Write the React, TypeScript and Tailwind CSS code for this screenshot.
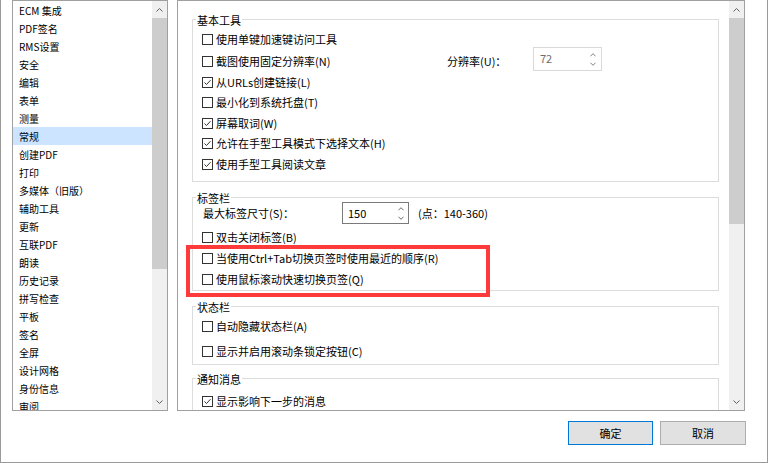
import React from "react";

const items = [
  "ECM 集成",
  "PDF签名",
  "RMS设置",
  "安全",
  "编辑",
  "表单",
  "测量",
  "常规",
  "创建PDF",
  "打印",
  "多媒体（旧版）",
  "辅助工具",
  "更新",
  "互联PDF",
  "朗读",
  "历史记录",
  "拼写检查",
  "平板",
  "签名",
  "全屏",
  "设计网格",
  "身份信息",
  "审阅",
];

function Chevron({ up, color = "#606060", w = 7 }: { up?: boolean; color?: string; w?: number }) {
  return (
    <svg width={w} height="4" viewBox="0 0 7 4" className="block">
      <path
        d={up ? "M0.5 3.5 L3.5 0.5 L6.5 3.5" : "M0.5 0.5 L3.5 3.5 L6.5 0.5"}
        stroke={color}
        strokeWidth="1"
        fill="none"
      />
    </svg>
  );
}

function Check({ checked }: { checked?: boolean }) {
  return (
    <svg width="11" height="11" viewBox="0 0 11 11" className="block shrink-0">
      <rect x="0.5" y="0.5" width="10" height="10" fill="white" stroke="#333333" />
      {checked && <path d="M2.5 5.5 L4.5 7.5 L8.5 3.2" stroke="#333333" strokeWidth="1" fill="none" />}
    </svg>
  );
}

function CheckRow({ label, checked, h }: { label: string; checked?: boolean; h: string }) {
  return (
    <div className={`flex items-center gap-[3px] pl-[9px] ${h}`}>
      <Check checked={checked} />
      <span className="leading-none">{label}</span>
    </div>
  );
}

function Group({ label, className, children }: { label: string; className: string; children: React.ReactNode }) {
  return (
    <div className={`ml-[14px] mr-[10px] border border-[#dcdcdc] ${className}`}>
      <div className="-mt-[5px] ml-[3px] h-[10px] w-fit bg-white px-[1px] leading-[10px]">{label}</div>
      {children}
    </div>
  );
}

function ScrollBar({ thumb }: { thumb: string }) {
  return (
    <div className="flex w-[15px] shrink-0 flex-col bg-[#f0f0f0]">
      <div className="flex h-[17px] items-center justify-center">
        <Chevron up />
      </div>
      <div className={`bg-[#cdcdcd] ${thumb}`} />
      <div className="flex-1" />
      <div className="flex h-[17px] items-center justify-center">
        <Chevron />
      </div>
    </div>
  );
}

export default function App() {
  return (
    <div className="relative flex h-[463px] w-[768px] flex-col overflow-hidden border-b border-l border-r border-[#9a9a9a] bg-white font-['Noto_Sans_CJK_SC',sans-serif] text-[11px] text-black">
      <div className="flex h-[411px] gap-[9px] pl-[11px]">
        {/* left list */}
        <div className="flex h-[411px] w-[156px] border border-[#a0a0a0]">
          <div className="flex-1 overflow-hidden text-[10px]">
            {items.map((it) => (
              <div
                key={it}
                className={`flex h-[18px] items-center pl-[6px] ${it === "常规" ? "bg-[#cce4ff]" : ""}`}
              >
                {it}
              </div>
            ))}
          </div>
          <ScrollBar thumb="h-[251px]" />
        </div>

        {/* right panel */}
        <div className="flex h-[411px] w-[568px] border border-[#a0a0a0]">
          <div className="flex-1 overflow-hidden">
            <Group label="基本工具" className="mt-[18px] pb-[6.5px]">
              <div className="mt-[4px]" />
              <CheckRow label="使用单键加速键访问工具" h="h-[21px]" />
              <div className="flex h-[22px] items-center">
                <div className="flex w-[254px] items-center gap-[3px] pl-[9px]">
                  <Check />
                  <span className="leading-none">截图使用固定分辨率(N)</span>
                </div>
                <div className="w-[86px] leading-none">分辨率(U)：</div>
                <div className="mb-[4px] flex h-[24px] w-[69px] items-stretch border border-[#d9d9d9] bg-white">
                  <div className="flex-1 pl-[6px] pt-[3px] leading-[14px] text-[#6d6d6d]">72</div>
                  <div className="flex w-[17px] flex-col items-center justify-center gap-[5px]">
                    <Chevron up color="#6d6d6d" w={6} />
                    <Chevron color="#6d6d6d" w={6} />
                  </div>
                </div>
              </div>
              <CheckRow label="从URLs创建链接(L)" checked h="h-[20.5px]" />
              <CheckRow label="最小化到系统托盘(T)" h="h-[20.5px]" />
              <CheckRow label="屏幕取词(W)" checked h="h-[20.5px]" />
              <CheckRow label="允许在手型工具模式下选择文本(H)" checked h="h-[20.5px]" />
              <CheckRow label="使用手型工具阅读文章" checked h="h-[20.5px]" />
            </Group>

            <Group label="标签栏" className="mt-[15px]">
              <div className="-mt-[1px] flex h-[22px] items-center">
                <div className="w-[149px] pl-[10px] leading-none">最大标签尺寸(S)：</div>
                <div className="flex h-[22px] w-[67px] items-stretch border border-[#7a7a7a] bg-white">
                  <div className="flex flex-1 items-center pl-[5px] leading-none">150</div>
                  <div className="flex w-[14px] flex-col items-center justify-center gap-[5px]">
                    <Chevron up color="#505050" w={6} />
                    <Chevron color="#505050" w={6} />
                  </div>
                </div>
                <div className="ml-[9px] leading-none">(点：140-360)</div>
              </div>
              <div className="mt-[3px]" />
              <CheckRow label="双击关闭标签(B)" h="h-[21px]" />
              <CheckRow label="当使用Ctrl+Tab切换页签时使用最近的顺序(R)" h="h-[21px]" />
              <CheckRow label="使用鼠标滚动快速切换页签(Q)" h="h-[21px]" />
            </Group>

            <Group label="状态栏" className="mt-[15px]">
              <div className="mt-[1.5px]" />
              <CheckRow label="自动隐藏状态栏(A)" h="h-[25px]" />
              <CheckRow label="显示并启用滚动条锁定按钮(C)" h="h-[25px]" />
            </Group>

            <Group label="通知消息" className="mt-[13px] pb-[10px]">
              <div className="mt-[7.5px]" />
              <CheckRow label="显示影响下一步的消息" checked h="h-[21px]" />
            </Group>
          </div>
          <ScrollBar thumb="h-[206px]" />
        </div>
      </div>

      {/* buttons */}
      <div className="mt-[10px] flex justify-end gap-[7px] pr-[21px]">
        <button className="flex h-[24px] w-[85px] items-center justify-center border border-[#0078d7] bg-[#e1e1e1] leading-none">
          确定
        </button>
        <button className="flex h-[24px] w-[86px] items-center justify-center border border-[#adadad] bg-[#e1e1e1] leading-none">
          取消
        </button>
      </div>

      {/* red highlight annotation */}
      <div className="pointer-events-none absolute left-[185px] top-[245px] h-[52px] w-[304px] border-[4px] border-[#fe3a3a]" />
    </div>
  );
}
